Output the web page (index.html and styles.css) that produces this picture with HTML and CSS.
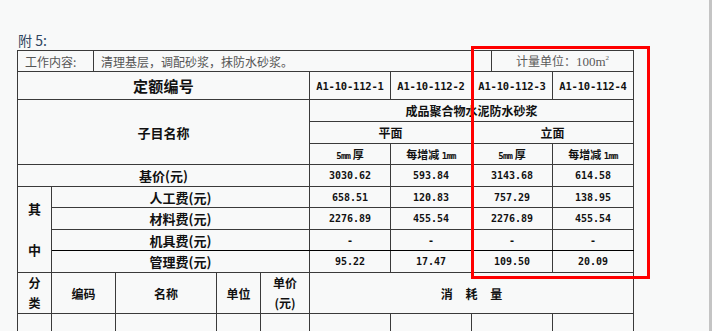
FILE: index.html
```html
<!DOCTYPE html>
<html lang="zh">
<head>
<meta charset="utf-8">
<title>附 5</title>
<link rel="stylesheet" href="styles.css">
</head>
<body>
<div class="page">
  <div class="title">附 5:</div>
  <table class="work">
    <colgroup><col class="w76"><col class="w398"><col class="w142"></colgroup>
    <tr>
      <td class="lbl">工作内容:</td>
      <td class="txt">清理基层，调配砂浆，抹防水砂浆。</td>
      <td class="unit">计量单位：<span class="num-serif">100m<sup>2</sup></span></td>
    </tr>
  </table>
  <table class="quota">
    <colgroup>
      <col class="c34"><col class="c64"><col class="c101"><col class="c44"><col class="c49">
      <col class="c81"><col class="c81"><col class="c81"><col class="c81">
    </colgroup>
    <tr class="h28">
      <td colspan="5" class="big">定额编号</td>
      <td class="code">A1-10-112-1</td>
      <td class="code">A1-10-112-2</td>
      <td class="code">A1-10-112-3</td>
      <td class="code">A1-10-112-4</td>
    </tr>
    <tr class="h22">
      <td colspan="5" rowspan="3" class="mid">子目名称</td>
      <td colspan="4" class="b">成品聚合物水泥防水砂浆</td>
    </tr>
    <tr class="h22">
      <td colspan="2" class="b">平面</td>
      <td colspan="2" class="b">立面</td>
    </tr>
    <tr class="h21">
      <td class="b small"><span class="num">5mm</span> 厚</td>
      <td class="b small">每增减 <span class="num">1mm</span></td>
      <td class="b small"><span class="num">5mm</span> 厚</td>
      <td class="b small">每增减 <span class="num">1mm</span></td>
    </tr>
    <tr class="h22">
      <td colspan="5" class="mid">基价(元)</td>
      <td class="num">3030.62</td>
      <td class="num">593.84</td>
      <td class="num">3143.68</td>
      <td class="num">614.58</td>
    </tr>
    <tr class="h21">
      <td rowspan="4" class="qz">其<br><br>中</td>
      <td colspan="4" class="mid">人工费(元)</td>
      <td class="num">658.51</td>
      <td class="num">120.83</td>
      <td class="num">757.29</td>
      <td class="num">138.95</td>
    </tr>
    <tr class="h22">
      <td colspan="4" class="mid">材料费(元)</td>
      <td class="num">2276.89</td>
      <td class="num">455.54</td>
      <td class="num">2276.89</td>
      <td class="num">455.54</td>
    </tr>
    <tr class="h21 dark">
      <td colspan="4" class="mid">机具费(元)</td>
      <td class="num">-</td>
      <td class="num">-</td>
      <td class="num">-</td>
      <td class="num">-</td>
    </tr>
    <tr class="h22">
      <td colspan="4" class="mid">管理费(元)</td>
      <td class="num">95.22</td>
      <td class="num">17.47</td>
      <td class="num">109.50</td>
      <td class="num">20.09</td>
    </tr>
    <tr class="h41">
      <td class="b two">分<br>类</td>
      <td class="b">编码</td>
      <td class="b">名称</td>
      <td class="b">单位</td>
      <td class="b two">单价<br>(元)</td>
      <td colspan="4" class="b spaced">消 耗 量</td>
    </tr>
    <tr class="h30">
      <td></td><td></td><td></td><td></td><td></td><td></td><td></td><td></td><td></td>
    </tr>
  </table>
</div>
<div class="mark"></div>
</body>
</html>
```
FILE: styles.css
```css
html, body {
  margin: 0;
  padding: 0;
}
body {
  width: 712px;
  height: 331px;
  overflow: hidden;
  background: #f8f9f9;
  border-right: 3px solid #c4c4c4;
  box-sizing: border-box;
  position: relative;
  font-family: "Noto Sans CJK SC", "Liberation Sans", sans-serif;
  color: #111;
}
.page {
  padding: 30px 0 0 17px;
}
.title {
  height: 20px;
  line-height: 20px;
  font-size: 14px;
  color: #2f4560;
  padding-left: 1px;
  font-family: "Noto Sans CJK SC", sans-serif;
}
table {
  border-collapse: collapse;
  table-layout: fixed;
  width: 616px;
}
td {
  border: 1px solid #3a3a3a;
  padding: 0;
  text-align: center;
  vertical-align: middle;
  white-space: nowrap;
  overflow: hidden;
}
.work td {
  border-bottom: none;
  height: 20px;
  font-size: 12px;
  color: #555;
  font-weight: normal;
}
.w76 { width: 76px; }
.w398 { width: 398px; }
.w142 { width: 142px; }
.work .lbl { text-align: left; padding-left: 7px; }
.work .txt { text-align: left; padding-left: 7px; }
.work .unit { text-align: center; color: #5a5a5a; }
.num-serif {
  font-family: "Liberation Serif", serif;
  font-size: 13px;
}
.num-serif sup {
  font-size: 7px;
  vertical-align: 6px;
  line-height: 0;
}
.c34 { width: 34px; }
.c64 { width: 64px; }
.c101 { width: 101px; }
.c44 { width: 44px; }
.c49 { width: 49px; }
.c81 { width: 81px; }
.h28 td { height: 27px; }
.h22 { height: 22px; }
.h21 { height: 21px; }
.h41 { height: 41px; }
.h30 { height: 30px; }
.big {
  font-size: 15px;
  font-weight: 700;
  letter-spacing: 0.3px;
}
.mid {
  font-size: 13px;
  font-weight: 700;
}
.b {
  font-size: 12px;
  font-weight: 700;
}
.small {
  font-size: 11px;
}
.code, .num {
  font-family: "DejaVu Sans Mono", "Liberation Mono", monospace;
  font-weight: 700;
  font-size: 10px;
  letter-spacing: 0;
}
.code {
  font-size: 10.5px;
  letter-spacing: -0.2px;
}
.small .num {
  font-size: 9px;
  letter-spacing: -0.8px;
}
.qz {
  font-size: 13px;
  font-weight: 700;
  line-height: 20.5px;
}
.two {
  line-height: 20px;
}
.spaced {
  font-size: 12px;
  word-spacing: 10px;
}
.dark td {
  border-bottom-color: #000;
}
.mark {
  position: absolute;
  left: 471px;
  top: 46px;
  width: 173px;
  height: 227px;
  border: 3px solid #ff0000;
}
```
